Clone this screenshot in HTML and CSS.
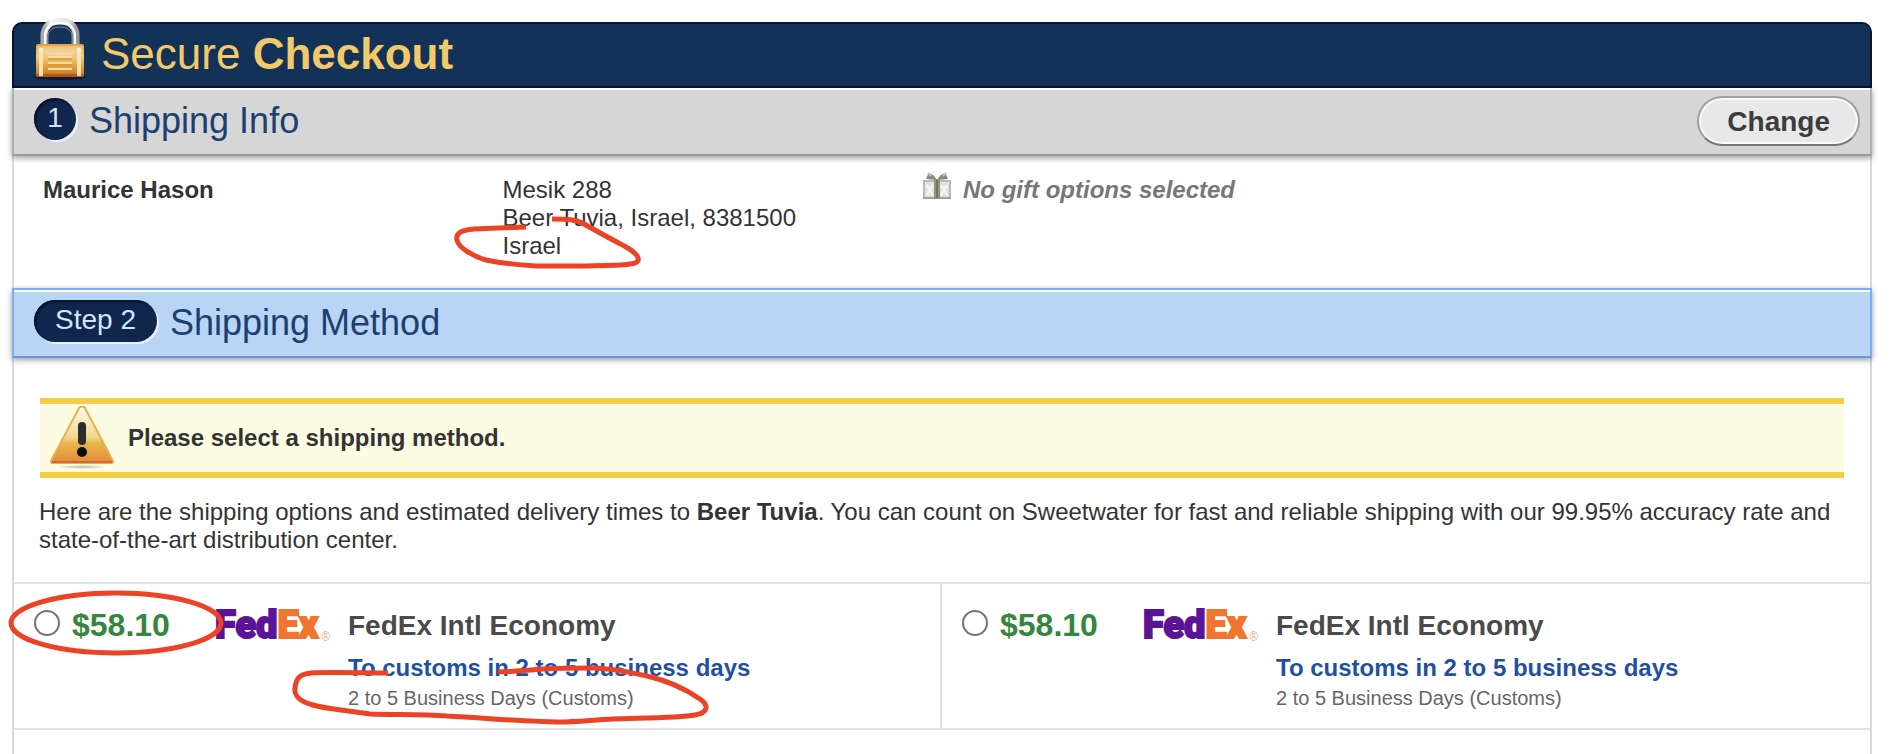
FILE: index.html
```
<!DOCTYPE html>
<html lang="en">
<head>
  <meta charset="UTF-8">
  <meta name="viewport" content="width=device-width, initial-scale=1.0">
  <title>Secure Checkout</title>
  <link rel="stylesheet" href="styles.css">
</head>
<body>
  <header class="checkout-header">
    <svg class="lock" viewBox="0 0 54 64" aria-hidden="true">
      <defs>
        <linearGradient id="lockBody" x1="0" y1="0" x2="0" y2="1">
          <stop offset="0" stop-color="#e0a03c"/>
          <stop offset="0.35" stop-color="#f3cc85"/>
          <stop offset="0.6" stop-color="#e9ac43"/>
          <stop offset="1" stop-color="#c8701c"/>
        </linearGradient>
        <linearGradient id="lockShackle" x1="0" y1="0" x2="1" y2="0">
          <stop offset="0" stop-color="#a9a9a9"/>
          <stop offset="0.2" stop-color="#f4f4f4"/>
          <stop offset="0.8" stop-color="#e4e4e4"/>
          <stop offset="1" stop-color="#9b9b9b"/>
        </linearGradient>
      </defs>
      <ellipse cx="27" cy="59" rx="26" ry="3" fill="#0a1c38"/>
      <path d="M11 30V18C11 8 18 3 27 3s16 5 16 15v12" fill="none" stroke="url(#lockShackle)" stroke-width="7"/>
      <path d="M12 28V18C12 9 19 5 27 5s15 4 15 13v10" fill="none" stroke="#fff" stroke-width="2"/>
      <path d="M15 28V19C15 12 20 9 27 9s12 3 12 10v9" fill="none" stroke="#8d8d8d" stroke-width="1"/>
      <rect x="3" y="26" width="48" height="33" rx="2" fill="url(#lockBody)"/>
      <path d="M4 56h46v3H4z" fill="#bb5317"/>
      <path d="M8 30v28M46 30v28" stroke="#fae3bb" stroke-width="4"/>
      <path d="M15 39h24M15 45h24M15 51h24" stroke="#f9dda4" stroke-width="2"/>
      <path d="M15 41h24M15 47h24M15 53h24" stroke="#c98a2d" stroke-width="1"/>
      <path d="M5 28h44v6q-22 7-44 0z" fill="#fff" opacity="0.3"/>
    </svg>
    <h1>Secure <strong>Checkout</strong></h1>
  </header>

  <main class="checkout">
    <section>
      <div class="step-bar done">
        <span class="badge">1</span>
        <h2>Shipping Info</h2>
        <button type="button" class="change">Change</button>
      </div>
      <div class="shipping-info">
        <p class="customer">Maurice Hason</p>
        <address>
          Mesik 288<br>
          Beer Tuvia, Israel, 8381500<br>
          Israel
          <svg class="mark mark-country" viewBox="0 0 200 65" aria-hidden="true">
            <path d="M102 9C116 9 126 9 136 15C148 22 163 30 176 37C190 45 193 53 180 54C171 56 155 55 136 56H86C68 55 50 53 36 50C22 46 8 37 7 30C5 22 14 20 24 19L76 17"/>
          </svg>
        </address>
        <div class="gift">
          <svg class="gift-icon" viewBox="0 0 28 28" aria-hidden="true">
            <path d="M14 8C9 0 5 0 3 7zM14 8c5-8 9-8 11-1z" fill="#8a8b7d"/>
            <path d="M5 1l3 3M23 1l-3 3" stroke="#b3c4ab" stroke-width="2"/>
            <rect y="8" width="28" height="19" fill="#e2e2e2"/>
            <path d="M0 9h28M1 9v18M27 9v18" stroke="#bcbcb6" stroke-width="2"/>
            <path d="M4 13l6 10M10 13L4 23M18 13l6 10M24 13l-6 10" stroke="#f7f7f7" stroke-width="2"/>
            <path d="M0 26h28" stroke="#a2a29d" stroke-width="2"/>
            <path d="M11 7h6v20h-6z" fill="#93927f"/>
            <path d="M14 8v18" stroke="#747465" stroke-width="2"/>
          </svg>
          <em>No gift options selected</em>
        </div>
      </div>
    </section>

    <section>
      <div class="step-bar active">
        <span class="badge">Step 2</span>
        <h2>Shipping Method</h2>
      </div>
      <div class="method-intro">
        <div class="alert" role="alert">
          <svg class="warning" viewBox="0 0 64 64" aria-hidden="true">
            <defs>
              <linearGradient id="warningFill" x1="0" y1="0" x2="0" y2="1">
                <stop offset="0" stop-color="#fffdf0"/>
                <stop offset="0.55" stop-color="#f2d58c"/>
                <stop offset="0.65" stop-color="#e9b64a"/>
                <stop offset="1" stop-color="#e08c3a"/>
              </linearGradient>
              <radialGradient id="warningShadow">
                <stop offset="0" stop-color="#b9b8a5"/>
                <stop offset="1" stop-color="#fcfce2"/>
              </radialGradient>
            </defs>
            <ellipse cx="32" cy="61" rx="25" ry="2" fill="url(#warningShadow)"/>
            <path d="M29 2q3-3 6 0l28 53q1 2-2 2H3q-3 0-2-2z" fill="url(#warningFill)" stroke="#e5ae51" stroke-width="2"/>
            <path d="M2 56h60" stroke="#d9663a" stroke-width="2"/>
            <rect x="28" y="16" width="8" height="23" rx="4" fill="#2d2d2d"/>
            <circle cx="32" cy="46" r="5" fill="#0c0c0c"/>
          </svg>
          <strong>Please select a shipping method.</strong>
        </div>
        <p>Here are the shipping options and estimated delivery times to <strong>Beer Tuvia</strong>. You can count on Sweetwater for fast and reliable shipping with our 99.95% accuracy rate and state-of-the-art distribution center.</p>
      </div>

      <div class="options">
        <div class="option">
          <div class="rate">
            <input type="radio" name="shipping" id="rate1">
            <label for="rate1">$58.10</label>
          </div>
          <svg class="carrier" viewBox="0 0 118 34" role="img" aria-label="FedEx">
            <text x="1" y="28"><tspan class="fed">Fed</tspan><tspan class="ex">Ex</tspan></text>
            <text class="reg" x="107" y="31">®</text>
          </svg>
          <div class="details">
            <h3>FedEx Intl Economy</h3>
            <p class="estimate">To customs in 2 to 5 business days</p>
            <p class="days">2 to 5 Business Days (Customs)</p>
            <svg class="mark mark-days" viewBox="0 0 430 70" aria-hidden="true">
              <path d="M211 12C226 12 240 10 256 9C275 8 293 8 306 8C325 8 345 13 360 16C382 21 400 30 413 39C423 46 420 53 408 55C392 58 350 58 326 59C305 60 290 62 273 62C240 62 200 58 160 56C133 54 108 55 83 54C58 50 39 49 26 45C11 41 7 34 8 28C9 19 12 14 24 13C42 12 75 13 101 13"/>
            </svg>
          </div>
          <svg class="mark mark-rate" viewBox="0 0 220 70" aria-hidden="true">
            <ellipse cx="110" cy="35" rx="105" ry="30"/>
          </svg>
        </div>
        <div class="option">
          <div class="rate">
            <input type="radio" name="shipping" id="rate2">
            <label for="rate2">$58.10</label>
          </div>
          <svg class="carrier" viewBox="0 0 118 34" role="img" aria-label="FedEx">
            <text x="1" y="28"><tspan class="fed">Fed</tspan><tspan class="ex">Ex</tspan></text>
            <text class="reg" x="107" y="31">®</text>
          </svg>
          <div class="details">
            <h3>FedEx Intl Economy</h3>
            <p class="estimate">To customs in 2 to 5 business days</p>
            <p class="days">2 to 5 Business Days (Customs)</p>
          </div>
        </div>
      </div>
    </section>
  </main>
</body>
</html>
```
FILE: styles.css
```
* {
  box-sizing: border-box;
}

body {
  font-family: "Liberation Sans", Arial, sans-serif;
  font-size: 24px;
  line-height: 28px;
  color: #333;
  background-color: #fff;
  margin: 0;
  padding: 22px 30px 0 12px;
  min-height: 100vh;
  display: flex;
  flex-direction: column;
}

h1, h2, h3, p {
  margin: 0;
}

/* header */
.checkout-header {
  position: relative;
  background-color: #123258;
  border: 2px solid #07152f;
  border-radius: 10px 10px 0 0;
  padding: 0 20px 2px 87px;
}

.checkout-header h1 {
  font-size: 44px;
  font-weight: normal;
  line-height: 60px;
  color: #f2ca6b;
}

.lock {
  position: absolute;
  left: 19px;
  top: -6px;
  width: 54px;
  height: 64px;
}

.checkout {
  flex: 1;
  border: 2px solid #d9d9d9;
  border-width: 0 2px;
}

/* step bars */
.step-bar {
  display: flex;
  align-items: flex-start;
  gap: 12px;
  margin: 0 -2px;
  padding: 8px 10px 8px 20px;
  border: 2px solid;
  box-shadow: inset 0 2px 0 #fff, 0 2px 6px rgba(0, 0, 0, 0.4);
}

.step-bar.done {
  background-color: #d6d6d6;
  border-color: #b0b0b0 #b0b0b0 #999;
  border-top: none;
}

.step-bar.active {
  background-color: #bad4f5;
  border-color: #7aadf9 #7aadf9 #6b97d5;
}

.step-bar h2 {
  flex: 1;
  font-size: 36px;
  font-weight: normal;
  line-height: 46px;
  color: #1b3f70;
  padding: 2px 0 2px 1px;
}

.badge {
  min-width: 42px;
  height: 42px;
  margin-top: 2px;
  padding: 0 21px;
  border-radius: 21px;
  background-color: #10264d;
  box-shadow: inset 2px 2px 2px #04122c, 2px 2px 0 #e9f0fa;
  color: #d3e5ff;
  font-size: 28px;
  line-height: 40px;
  text-align: center;
}

.done .badge {
  padding: 0;
}

.change {
  height: 50px;
  padding: 2px 28px 0;
  border: 2px solid #a0a0a0;
  border-bottom-color: #777;
  border-radius: 25px;
  background-color: #e8e8e8;
  box-shadow: inset 0 0 0 2px #fafafa;
  color: #3c3c3c;
  font-family: inherit;
  font-size: 28px;
  font-weight: bold;
  cursor: pointer;
}

/* shipping info */
.shipping-info {
  display: grid;
  grid-template-columns: 460fr 421fr 920fr;
  padding: 20px 28px 28px 29px;
}

.customer {
  font-weight: bold;
}

address {
  position: relative;
  font-style: normal;
}

.gift {
  display: flex;
  align-items: flex-start;
  gap: 12px;
  font-weight: bold;
  color: #777;
}

.gift-icon {
  width: 28px;
  height: 28px;
  margin-top: -4px;
}

/* shipping method */
.method-intro {
  padding: 40px 24px 28px 25px;
}

.alert {
  display: flex;
  align-items: center;
  gap: 14px;
  margin: 0 2px 20px 1px;
  padding: 2px 10px;
  border: 6px solid #f7cd45;
  border-width: 6px 0;
  background-color: #fcfce2;
}

.warning {
  width: 64px;
  height: 64px;
}

.options {
  display: grid;
  grid-template-columns: 1fr 1fr;
  border: 2px solid #e2e2e2;
  border-width: 2px 0;
}

.option {
  position: relative;
  display: grid;
  grid-template-columns: 180px 134px 1fr;
  align-items: start;
  padding: 26px 20px 18px;
}

.option:first-child {
  border-right: 2px solid #e2e2e2;
}

.rate {
  display: flex;
  gap: 12px;
}

.rate input {
  appearance: none;
  width: 26px;
  height: 26px;
  margin: 0;
  border: 2px solid #757575;
  border-radius: 50%;
  background-color: #fff;
}

.rate input:checked {
  background-color: #1b3f70;
  box-shadow: inset 0 0 0 4px #fff;
}

.rate label {
  font-size: 32px;
  font-weight: bold;
  line-height: 30px;
  color: #38863e;
}

.carrier {
  width: 118px;
  height: 34px;
  overflow: visible;
  font-family: Roboto, sans-serif;
  font-size: 38px;
  font-weight: 900;
}

.fed {
  fill: #5c1496;
  stroke: #5c1496;
  stroke-width: 2px;
}

.ex {
  fill: #f0752f;
  stroke: #f0752f;
  stroke-width: 2px;
}

.reg {
  font-size: 12px;
  font-weight: bold;
  fill: #efb88f;
}

.details {
  position: relative;
}

.details h3 {
  font-size: 28px;
  line-height: 32px;
  color: #4a4a4a;
  margin-bottom: 12px;
}

.estimate {
  font-weight: bold;
  color: #1f50a2;
}

.days {
  font-size: 20px;
  line-height: 24px;
  color: #666;
  margin-top: 4px;
}

/* hand-drawn marks */
.mark {
  position: absolute;
  fill: none;
  stroke: #ec4225;
  stroke-width: 5px;
  pointer-events: none;
}

.mark-country {
  left: -52px;
  top: 34px;
  width: 200px;
  height: 65px;
}

.mark-days {
  left: -61px;
  top: 50px;
  width: 430px;
  height: 70px;
}

.mark-rate {
  left: -8px;
  top: 4px;
  width: 220px;
  height: 70px;
}
```
